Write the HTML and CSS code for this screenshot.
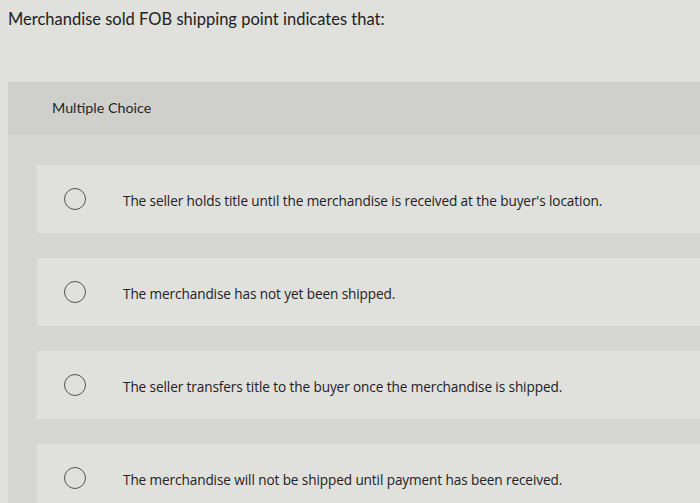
FILE: index.html
```html
<!DOCTYPE html>
<html>
<head>
<meta charset="utf-8">
<link rel="stylesheet" href="styles.css">
</head>
<body>
<p class="question">Merchandise sold FOB shipping point indicates that:</p>
<section class="panel">
  <div class="panel-head">Multiple Choice</div>
  <div class="options">
    <label class="option"><span class="radio"></span><span class="opt-text">The seller holds title until the merchandise is received at the buyer's location.</span></label>
    <label class="option"><span class="radio"></span><span class="opt-text">The merchandise has not yet been shipped.</span></label>
    <label class="option"><span class="radio"></span><span class="opt-text">The seller transfers title to the buyer once the merchandise is shipped.</span></label>
    <label class="option"><span class="radio"></span><span class="opt-text">The merchandise will not be shipped until payment has been received.</span></label>
  </div>
</section>
</body>
</html>
```
FILE: styles.css
```css
html, body {
  margin: 0;
  padding: 0;
}
body {
  background: #e0e0dc;
  font-family: Lato, "Open Sans", sans-serif;
  color: #1f1f1f;
  height: 503px;
  overflow: hidden;
}
.question {
  margin: 0;
  padding: 9px 0 0 8px;
  font-size: 16.5px;
  line-height: 20px;
  color: #222;
}
.panel {
  margin: 53px 0 0 8px;
  background: #d6d6d3;
}
.panel-head {
  height: 53px;
  box-sizing: border-box;
  padding: 16px 0 0 44px;
  font-size: 14.3px;
  line-height: 19px;
  background: #cfcfcc;
  color: #262626;
}
.options {
  display: flex;
  flex-direction: column;
  gap: 25px;
  padding: 30px 0 0 29px;
}
.option {
  display: flex;
  align-items: center;
  height: 68px;
  background: #e0e0dd;
  padding-left: 27px;
}
.radio {
  width: 22px;
  height: 22px;
  border: 1px solid #555;
  border-radius: 50%;
  box-sizing: border-box;
  flex: none;
}
.opt-text {
  margin-left: 37px;
  padding-top: 2px;
  font-family: "Open Sans", sans-serif;
  font-size: 13.6px;
  font-weight: 500;
  letter-spacing: -0.1px;
  color: #222;
}
```
